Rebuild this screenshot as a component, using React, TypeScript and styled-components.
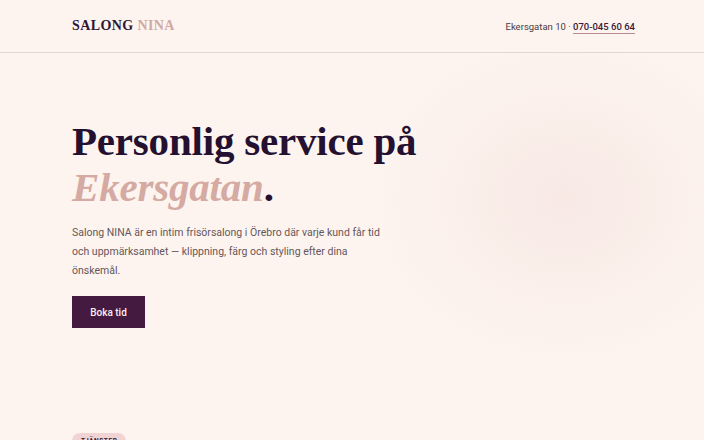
import React from "react";
import styled, { createGlobalStyle } from "styled-components";

const GlobalStyle = createGlobalStyle`
  html, body {
    margin: 0;
    padding: 0;
    background: #fdf4ef;
  }
  body {
    font-family: Roboto, "Liberation Sans", sans-serif;
    color: #2a1431;
  }
`;

const Page = styled.div`
  height: 440px;
  background: #fdf4ef;
  overflow: hidden;
`;

const Header = styled.header`
  display: flex;
  justify-content: space-between;
  align-items: center;
  height: 52px;
  padding: 0 69px 0 72px;
  border-bottom: 1px solid #e4d5cf;
`;

const Logo = styled.div`
  font-family: "Liberation Serif", "DejaVu Serif", serif;
  font-weight: 700;
  font-size: 14px;
  letter-spacing: 0.4px;
  color: #2e1636;
`;

const LogoAccent = styled.span`
  color: #d2a9a3;
`;

const Contact = styled.div`
  font-size: 9.5px;
  color: #4a3a40;
`;

const Phone = styled.a`
  color: #3a1838;
  font-weight: 500;
  text-decoration: none;
  border-bottom: 1px solid #b88c92;
  padding-bottom: 1px;
`;

const Hero = styled.section`
  padding: 65px 72px 0;
  height: 315px;
  background: radial-gradient(
    ellipse 190px 160px at 565px 145px,
    #f8e9e5 0%,
    #faeee9 45%,
    rgba(253, 244, 239, 0) 100%
  );
`;

const Title = styled.h1`
  margin: 0;
  font-family: "Liberation Serif", "DejaVu Serif", serif;
  font-weight: 700;
  font-size: 41px;
  line-height: 46px;
  color: #241030;
  letter-spacing: -0.2px;
`;

const TitleAccent = styled.em`
  color: #d4aaa2;
  font-style: italic;
`;

const Lead = styled.p`
  margin: 13px 0 0;
  max-width: 316px;
  font-size: 10.5px;
  line-height: 19px;
  color: #66565b;
`;

const PrimaryButton = styled.button`
  margin-top: 16px;
  width: 73px;
  height: 32px;
  border: none;
  background: #441a40;
  color: #fbeef0;
  font-family: inherit;
  font-size: 10px;
  font-weight: 500;
  cursor: pointer;
`;

const Services = styled.section`
  display: flex;
  padding: 0 72px;
`;

const Tag = styled.span`
  padding: 4px 9px;
  border-radius: 12px;
  background: #f2d3d3;
  color: #3a1838;
  font-size: 6.5px;
  font-weight: 700;
  letter-spacing: 0.6px;
`;

export default function App() {
  return (
    <Page>
      <GlobalStyle />
      <Header>
        <Logo>
          SALONG <LogoAccent>NINA</LogoAccent>
        </Logo>
        <Contact>
          Ekersgatan 10 · <Phone href="#">070-045 60 64</Phone>
        </Contact>
      </Header>
      <Hero>
        <Title>
          Personlig service på
          <br />
          <TitleAccent>Ekersgatan</TitleAccent>.
        </Title>
        <Lead>
          Salong NINA är en intim frisörsalong i Örebro där varje kund får tid
          och uppmärksamhet — klippning, färg och styling efter dina önskemål.
        </Lead>
        <PrimaryButton>Boka tid</PrimaryButton>
      </Hero>
      <Services>
        <Tag>TJÄNSTER</Tag>
      </Services>
    </Page>
  );
}
